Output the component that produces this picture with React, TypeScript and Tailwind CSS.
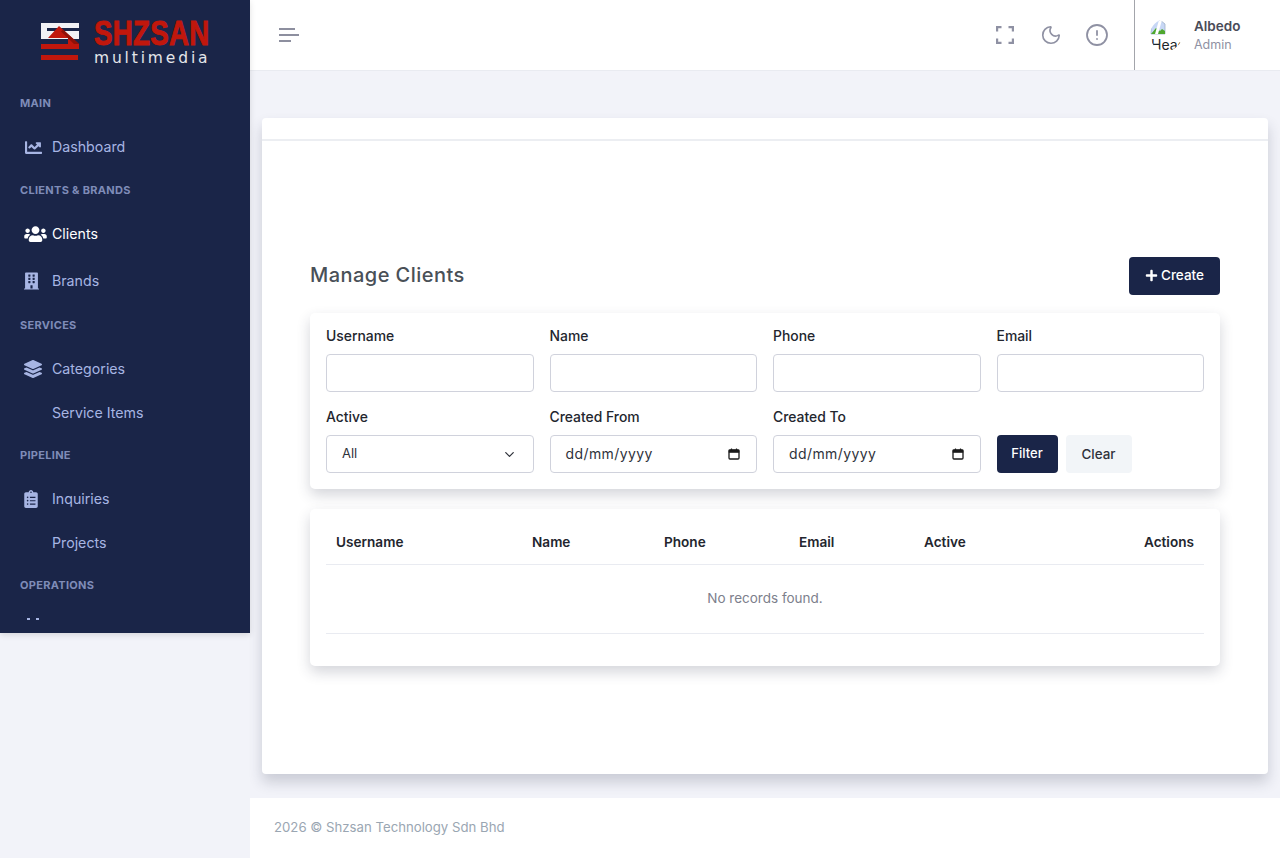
import { FaChartLine, FaUsers, FaBuilding, FaLayerGroup, FaClipboardList, FaPlus } from "react-icons/fa";
import { Moon, CircleAlert, ChevronDown } from "lucide-react";
import type { ReactNode } from "react";

function Logo() {
  return (
    <div className="flex items-center justify-center h-[83px] pl-[41px] pr-[42px] gap-[15px]">
      <svg width="38" height="39" viewBox="0 0 38 39" className="shrink-0">
        <rect x="0" y="1" width="38" height="16" fill="#f1f1f4" />
        <path d="M6 6h32v3H6z" fill="#1a2548" />
        <path d="M18 4 L38 22 H27 V16 H7z" fill="#c1170c" />
        <path d="M22 7.6 L38 22 H33 L20 9.5z" fill="#8f1209" />
        <rect x="0" y="22" width="38" height="5" fill="#c1170c" />
        <rect x="0" y="33" width="37" height="5" fill="#c1170c" />
      </svg>
      <div className="flex flex-col w-[114px] shrink-0 pt-[2px]">
        <span className="font-[family-name:'Liberation_Sans',sans-serif] font-bold text-[35px] leading-[27px] text-[#c1170c] origin-left scale-x-[0.79] whitespace-nowrap tracking-[0.4px] [-webkit-text-stroke:1px_#c1170c]">SHZSAN</span>
        <span className="font-[family-name:'DejaVu_Sans',sans-serif] text-[15.5px] leading-[16px] mt-[4px] text-[#e4e5ea] tracking-[2.85px] whitespace-nowrap">multimedia</span>
      </div>
    </div>
  );
}

function Section({ children, className }: { children: ReactNode; className: string }) {
  return (
    <div className={`px-5 text-[11px] leading-[14px] font-bold uppercase tracking-[0.3px] text-[#7f8cb8] ${className}`}>{children}</div>
  );
}

function Item({ icon, label, active, className }: { icon?: ReactNode; label: string; active?: boolean; className: string }) {
  return (
    <div className={`flex items-center pl-6 h-[22px] text-[14.2px] ${active ? "text-white" : "text-[#a7b5e3]"} ${className}`}>
      <span className="w-[28px] flex items-center shrink-0 text-[17px]">{icon}</span>
      <span>{label}</span>
    </div>
  );
}

function Sidebar() {
  return (
    <aside className="relative z-10 w-[250px] h-[633px] shrink-0 bg-[#1a2548] shadow-[0_2px_6px_rgba(0,0,0,0.12)] font-[family-name:Inter,sans-serif]">
      <Logo />
      <div className="h-[539px] overflow-hidden">
        <Section className="mt-[13px]">Main</Section>
        <Item className="mt-[26px]" icon={<FaChartLine className="w-[19px] h-[17px]" />} label="Dashboard" />
        <Section className="mt-[25px]">Clients &amp; Brands</Section>
        <Item className="mt-[26px]" active icon={<FaUsers className="w-[23px] h-[18px]" />} label="Clients" />
        <Item className="mt-[25px]" icon={<FaBuilding className="w-[15px] h-[18px]" />} label="Brands" />
        <Section className="mt-[26px]">Services</Section>
        <Item className="mt-[26px]" icon={<FaLayerGroup className="w-[18px] h-[18px]" />} label="Categories" />
        <Item className="mt-[22px]" label="Service Items" />
        <Section className="mt-[24px]">Pipeline</Section>
        <Item className="mt-[26px]" icon={<FaClipboardList className="w-[14px] h-[18px]" />} label="Inquiries" />
        <Item className="mt-[22px]" label="Projects" />
        <Section className="mt-[24px]">Operations</Section>
        <div className="flex gap-[6px] pl-[27px] mt-[26px]">
          <span className="w-[3px] h-[2px] bg-[#a7b5e3]" />
          <span className="w-[3px] h-[2px] bg-[#a7b5e3]" />
        </div>
      </div>
    </aside>
  );
}

function Header() {
  return (
    <header className="h-[71px] shrink-0 bg-white border-b border-[#e9ebf1] flex items-center">
      <svg width="20" height="14" viewBox="0 0 20 14" className="ml-[29px] text-[#8d8f9f]" fill="currentColor">
        <rect x="0" y="0" width="16" height="2" />
        <rect x="0" y="6" width="20" height="2" />
        <rect x="0" y="12" width="12" height="2" />
      </svg>
      <div className="ml-auto flex items-center h-full text-[#8f91a3]">
        <svg width="18" height="18" viewBox="0 0 18 18" fill="none" stroke="currentColor" strokeWidth="2.2">
          <path d="M1.1 5.5V1.1h4.4M12.5 1.1h4.4v4.4M16.9 12.5v4.4h-4.4M5.5 16.9H1.1v-4.4" />
        </svg>
        <Moon className="ml-[26px] w-[22px] h-[22px]" strokeWidth={1.8} />
        <CircleAlert className="ml-[23px] w-[24px] h-[24px]" strokeWidth={1.8} />
        <div className="ml-[25px] h-full w-[146px] border-l border-[#a3a5ab] flex items-center pl-[15px]">
          <div className="w-[32px] h-[32px] rounded-full overflow-hidden shrink-0 text-[14px] leading-[20px] text-[#212529] font-[family-name:Inter,sans-serif]">
            <svg width="16" height="16" viewBox="0 0 16 16" className="block">
              <path d="M1 1h9l5 4v10H1z" fill="#c7d7f5" stroke="#9fb1c9" strokeWidth="0.8" />
              <path d="M1 15l5-6 4 3 2-2 3 2v3z" fill="#4ea72e" />
              <path d="M9 1h3l-4 14H5z" fill="#ffffff" />
            </svg>
            <span className="block pl-[1px] whitespace-nowrap">Head</span>
          </div>
          <div className="ml-[12px] font-[family-name:Inter,sans-serif]">
            <div className="text-[13.5px] leading-[20px] font-semibold text-[#4a4c58]">Albedo</div>
            <div className="text-[12.5px] leading-[18px] text-[#8f91a3]">Admin</div>
          </div>
        </div>
      </div>
    </header>
  );
}

const inputBox = "w-full h-[38px] rounded-[4px] border border-[#d0d2dc] bg-white";

function Field({ label, children }: { label: string; children: ReactNode }) {
  return (
    <div>
      <div className="text-[13.9px] leading-[21px] mb-[7px] font-medium text-[#23262e]">{label}</div>
      {children}
    </div>
  );
}

function DateBox() {
  return (
    <div className={`${inputBox} flex items-center pl-[15px] pr-[16px] pb-[1px] text-[14px] tracking-[0.4px] text-[#2f323b]`}>
      <span>dd/mm/yyyy</span>
      <svg width="12" height="12" viewBox="0 0 12 12" className="ml-auto" fill="none" stroke="#1a1a1a">
        <rect x="1" y="2" width="10" height="9" rx="1" strokeWidth="1.3" />
        <rect x="1" y="2" width="10" height="2.5" fill="#1a1a1a" strokeWidth="0.6" />
        <path d="M3.5 0.5v2M8.5 0.5v2" strokeWidth="1.2" />
      </svg>
    </div>
  );
}

function FilterCard() {
  return (
    <div className="bg-white rounded-[5px] shadow-[0_6px_14px_rgba(40,45,70,0.2)] px-4 pt-[13px] pb-4 grid grid-cols-4 gap-x-4 gap-y-[15px]">
      <Field label="Username"><div className={inputBox} /></Field>
      <Field label="Name"><div className={inputBox} /></Field>
      <Field label="Phone"><div className={inputBox} /></Field>
      <Field label="Email"><div className={inputBox} /></Field>
      <Field label="Active">
        <div className={`${inputBox} flex items-center pl-[15px] pr-[16px] text-[13px] text-[#2f323b]`}>
          <span>All</span>
          <ChevronDown className="ml-auto w-[15px] h-[15px]" strokeWidth={2} />
        </div>
      </Field>
      <Field label="Created From"><DateBox /></Field>
      <Field label="Created To"><DateBox /></Field>
      <div className="flex items-end gap-2">
        <button className="h-[38px] w-[61px] rounded-[4px] bg-[#1a2548] text-white text-[13px] font-medium">Filter</button>
        <button className="h-[38px] w-[66px] rounded-[4px] bg-[#f2f5f8] text-[#2f323b] text-[13.4px] font-medium">Clear</button>
      </div>
    </div>
  );
}

function TableCard() {
  const th = "px-[10px] h-[43px] text-left text-[13.6px] font-semibold text-[#23262e] border-b border-[#e9ebf1]";
  return (
    <div className="mt-5 bg-white rounded-[5px] shadow-[0_6px_14px_rgba(40,45,70,0.2)] px-4 pt-[12px] pb-8">
      <table className="w-full table-fixed border-collapse">
        <thead>
          <tr>
            <th className={`${th} w-[196px]`}>Username</th>
            <th className={`${th} w-[132px]`}>Name</th>
            <th className={`${th} w-[135px]`}>Phone</th>
            <th className={`${th} w-[125px]`}>Email</th>
            <th className={`${th} w-[150px]`}>Active</th>
            <th className={`${th} text-right`}>Actions</th>
          </tr>
        </thead>
        <tbody>
          <tr>
            <td colSpan={6} className="h-[69px] text-center text-[13.5px] text-[#7d808c] border-b border-[#e9ebf1]">No records found.</td>
          </tr>
        </tbody>
      </table>
    </div>
  );
}

export default function App() {
  return (
    <div className="flex h-[858px] overflow-hidden bg-[#f2f3f9] font-[family-name:Inter,sans-serif]">
      <Sidebar />
      <div className="flex-1 min-w-0 flex flex-col">
        <Header />
        <main className="flex-1 px-3 pt-[47px]">
          <div className="h-[656px] bg-white rounded-[4px] shadow-[0_8px_14px_rgba(40,45,70,0.2)]">
            <div className="h-[23px] border-b-2 border-[#eceef2]" />
            <div className="px-12 pt-[116px]">
              <div className="flex items-center justify-between h-[38px] mb-[18px]">
                <h1 className="text-[20px] font-medium text-[#495057] tracking-[0.45px] pb-[2px]">Manage Clients</h1>
                <button className="h-[38px] w-[91px] pb-[1px] rounded-[4px] bg-[#1a2548] text-white text-[13.5px] font-medium flex items-center justify-center gap-[3px]">
                  <FaPlus className="w-[13px] h-[13px]" />
                  Create
                </button>
              </div>
              <FilterCard />
              <TableCard />
            </div>
          </div>
        </main>
        <footer className="h-[60px] shrink-0 bg-white flex items-center pl-6 text-[13.2px] text-[#9aa6b2]">2026 © Shzsan Technology Sdn Bhd</footer>
      </div>
    </div>
  );
}
